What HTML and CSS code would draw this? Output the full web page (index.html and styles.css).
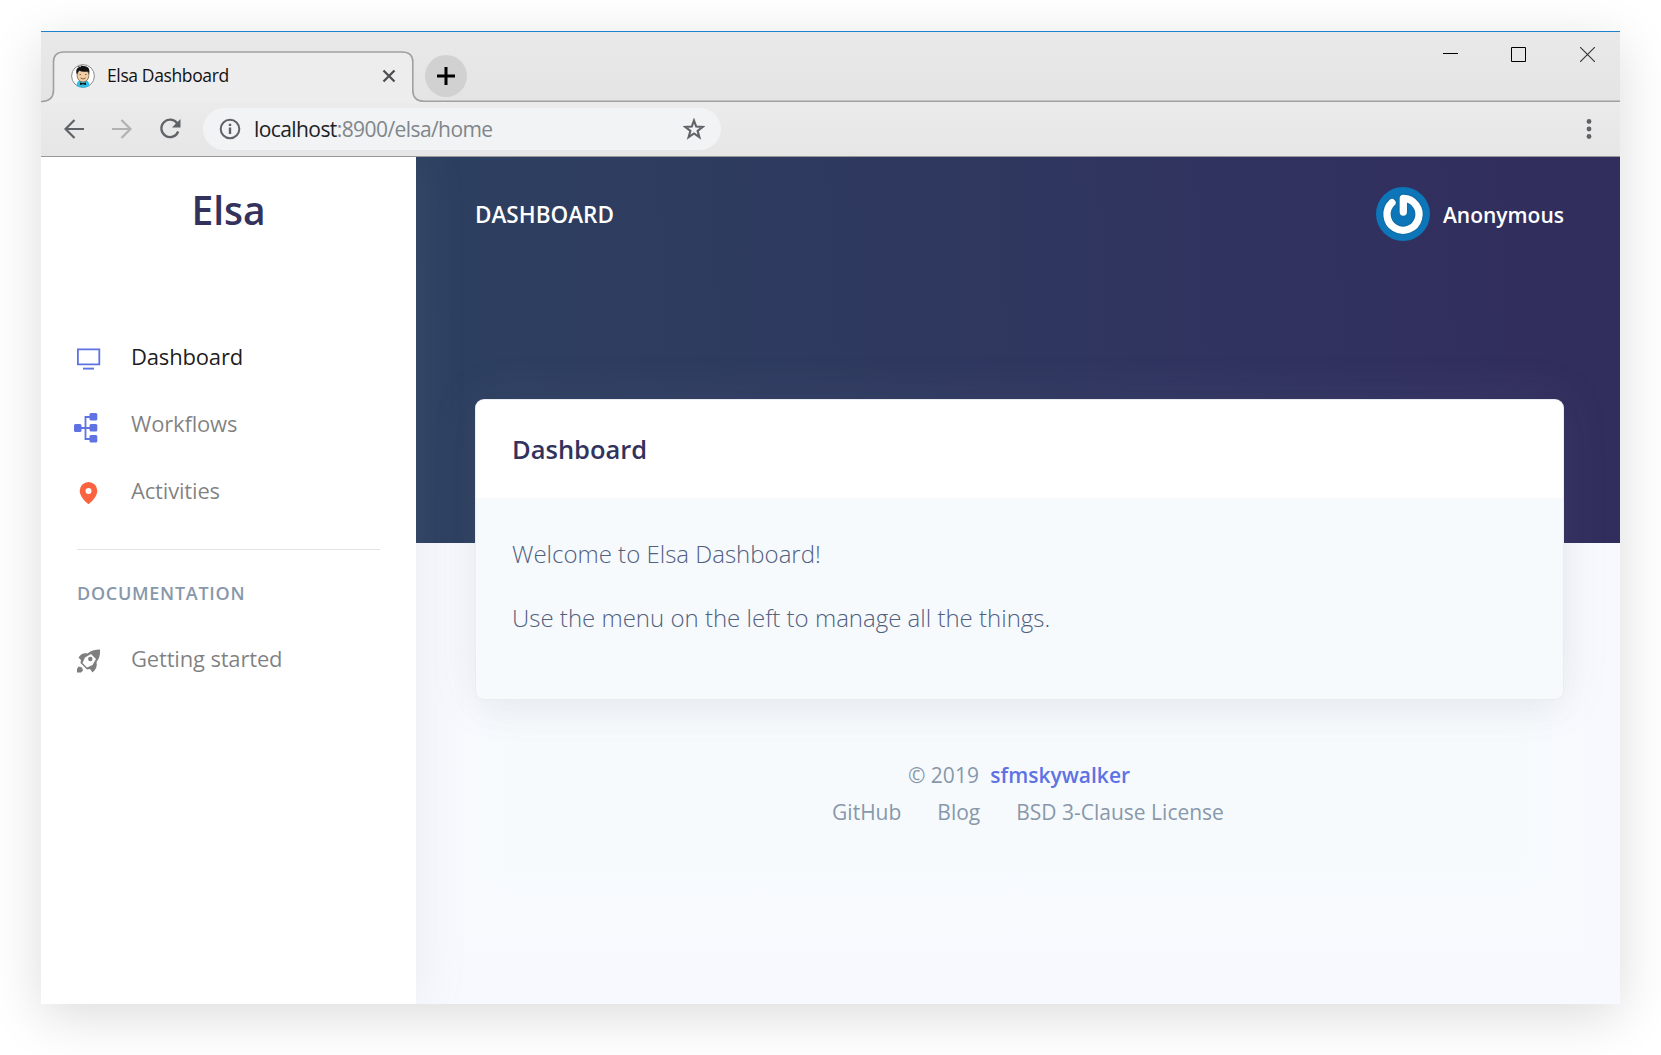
FILE: index.html
```html
<!DOCTYPE html>
<html lang="en">
<head>
<meta charset="utf-8">
<title>Elsa Dashboard</title>
<link rel="stylesheet" href="styles.css">
</head>
<body>
<div class="window">
  <header class="chrome">
    <div class="tabstrip">
      <svg class="tab-outline" width="1579" height="72" viewBox="0 0 1579 72" fill="none"><path d="M0 70.500H1Q12.500 70 12.500 59V31Q12.500 21 23 21H361Q371.800 21 371.800 31V59Q371.800 70.300 383 70.300H1579V72H0Z" fill="#ededed"/><path d="M0 70.500H1Q12.500 70 12.500 59V31Q12.500 21 23 21H361Q371.800 21 371.800 31V59Q371.800 70.300 383 70.300H1579" stroke="#a0a0a0" stroke-width="1.600"/></svg>
      <div class="tab">
        <svg class="favicon" width="24" height="24" viewBox="0 0 24 24"><circle cx="12" cy="12" r="11.400" fill="#fff" stroke="#8b8b8b"/><path d="M5.500 22Q6 16.500 9 16.500H15Q18 16.500 18.500 22Q12 25 5.500 22Z" fill="#31bde6"/><ellipse cx="12" cy="11.500" rx="5.900" ry="6.500" fill="#f1cda5" stroke="#6b5037" stroke-width=".7"/><path d="M5.800 10.500C4.500 6 6 3.500 8 3.500L6.500 2L10 3L9.500 1.500Q17 2 17.800 4.500Q19 7 18.200 10.500L17 7.500Q11 8.500 8 6.500Z" fill="#111"/><path d="M9 18.500L12 19.300L15 18.500V21L12 20.200L9 21Z" fill="#111"/><path d="M9.500 14Q12 16 14.500 14M8.500 10.500H10M14 10.500H15.500" stroke="#8b6044" fill="none"/></svg>
        <span class="tab-title">Elsa Dashboard</span>
        <svg class="tab-close" width="14" height="14" viewBox="0 0 14 14"><path d="M1.500 1.500L12.500 12.500M12.500 1.500L1.500 12.500" stroke="#4d4f52" stroke-width="2.300"/></svg>
      </div>
      <div class="new-tab"><svg width="18" height="18" viewBox="0 0 18 18"><path d="M9 0V18M0 9H18" stroke="#000" stroke-width="3"/></svg></div>
      <div class="controls">
        <svg width="15" height="15" viewBox="0 0 15 15"><path d="M0 6.500H15" stroke="#000"/></svg>
        <svg width="15" height="15" viewBox="0 0 15 15"><path d="M.5 .5H14.500V14.500H.5Z" fill="none" stroke="#000"/></svg>
        <svg width="15" height="15" viewBox="0 0 15 15"><path d="M0 0L15 15M15 0L0 15" stroke="#333" stroke-width="1.100"/></svg>
      </div>
    </div>
    <div class="toolbar">
      <svg class="back" width="20" height="20" viewBox="0 0 20 20"><path d="M20 10H2M10.500 1L1.500 10L10.500 19" fill="none" stroke="#5f6368" stroke-width="2.200"/></svg>
      <svg class="forward" width="20" height="20" viewBox="0 0 20 20"><path d="M0 10H18M9.500 1L18.500 10L9.500 19" fill="none" stroke="#b0b1b2" stroke-width="2.200"/></svg>
      <svg class="reload" width="22" height="22" viewBox="0 0 22 22"><path d="M18.300 5.500A8.700 8.700 0 1 0 19.200 13.500" fill="none" stroke="#5f6368" stroke-width="2.300"/><path d="M21.500 1V9.500H13Z" fill="#5f6368"/></svg>
      <div class="address">
        <svg width="22" height="22" viewBox="0 0 22 22"><circle cx="11" cy="11" r="9.300" fill="none" stroke="#5f6368" stroke-width="2"/><path d="M11 9.500V16M11 5.800V8" stroke="#5f6368" stroke-width="2.400"/></svg>
        <span class="url">localhost<span class="url-rest">:8900/elsa/home</span></span>
        <svg class="star" width="22" height="22" viewBox="0 0 22 22"><path d="M11 2.500L13.200 8.600L19.700 8.900L14.600 12.800L16.400 19.200L11 15.500L5.600 19.200L7.400 12.800L2.300 8.900L8.800 8.600Z" fill="none" stroke="#5f6368" stroke-width="2.100"/></svg>
      </div>
      <svg class="more" width="6" height="20" viewBox="0 0 6 20" fill="#5f6368"><circle cx="3" cy="2.500" r="2.400"/><circle cx="3" cy="10" r="2.400"/><circle cx="3" cy="17.500" r="2.400"/></svg>
    </div>
  </header>
  <div class="app">
    <aside class="sidebar">
      <h1 class="brand">Elsa</h1>
      <nav class="nav">
        <a class="nav-item active"><svg width="24" height="24" viewBox="0 0 24 24"><path d="M.9 2.300H22.300V17.300H.9Z" fill="none" stroke="#5e72e4" stroke-width="1.800"/><path d="M6 21.600H17" stroke="#5e72e4" stroke-width="1.900"/></svg><span>Dashboard</span></a>
        <a class="nav-item"><svg class="flow" width="24" height="30" viewBox="0 0 24 30"><path d="M7 15H16M16 4H11.500V26H16" fill="none" stroke="#5e72e4" stroke-width="1.800"/><g fill="#5e72e4"><rect x="0" y="11" width="7.500" height="8" rx="1.500"/><rect x="15.500" y="0" width="7.800" height="7.500" rx="1.500"/><rect x="15.500" y="11" width="7.800" height="7.500" rx="1.500"/><rect x="15.500" y="22" width="7.800" height="7.500" rx="1.500"/></g></svg><span>Workflows</span></a>
        <a class="nav-item"><svg width="24" height="24" viewBox="0 0 24 24"><path fill="#fb6340" fill-rule="evenodd" d="M11.500 1A8.800 8.800 0 0 1 20.300 9.700C20.300 15 15 20.500 11.500 23.200C8 20.500 2.700 15 2.700 9.700A8.800 8.800 0 0 1 11.500 1ZM11.500 6.900A3 3 0 1 0 11.500 12.900A3 3 0 1 0 11.500 6.900Z"/></svg><span>Activities</span></a>
      </nav>
      <hr class="rule">
      <h6 class="nav-heading">Documentation</h6>
      <a class="nav-item"><svg width="24" height="24" viewBox="0 0 24 24"><path fill="#7f7f7f" fill-rule="evenodd" d="M23 .5C23.500 6 22 10 19.500 13C20.500 17 19 20.500 15.500 23.500L13 20L10 20.500L3.500 14L4 11L1.500 8.500C4 4.500 7 3.500 10.500 4.500C13.500 2 17.500 .5 23 .5ZM14 5L8 8.500L5.500 14L10 18.500L15.500 16L19 10ZM13.300 7.800A2.200 2.200 0 1 0 13.300 12.200A2.200 2.200 0 1 0 13.300 7.800Z"/><path fill="#7f7f7f" d="M1.500 17.500L5 18.500L6 21.500L4 23.500H0V20Z"/></svg><span>Getting started</span></a>
    </aside>
    <main class="main">
      <div class="hero">
        <div class="page-title">Dashboard</div>
        <div class="user">
          <svg width="54" height="54" viewBox="0 0 54 54"><circle cx="27" cy="27" r="27" fill="#0c76b8"/><path d="M15.800 15.500A16 16 0 1 0 27.300 11V25" fill="none" stroke="#1b5c88" stroke-opacity=".35" stroke-width="9.500" stroke-linecap="round" stroke-linejoin="round"/><path d="M16 15.700A16 16 0 1 0 27.300 11.300V25" fill="none" stroke="#fff" stroke-width="7.300" stroke-linecap="round" stroke-linejoin="round"/></svg>
          <span>Anonymous</span>
        </div>
      </div>
      <section class="card">
        <h3 class="card-head">Dashboard</h3>
        <div class="card-body"><p>Welcome to Elsa Dashboard!</p><p>Use the menu on the left to manage all the things.</p></div>
      </section>
      <footer class="footer">
        <div class="copyright">© 2019 <b>sfmskywalker</b></div>
        <div class="links"><a>GitHub</a><a>Blog</a><a>BSD 3-Clause License</a></div>
      </footer>
    </main>
  </div>
</div>
</body>
</html>
```
FILE: styles.css
```css
* { box-sizing: border-box; }
body { margin: 0; background: #fff; font-family: "Open Sans", sans-serif; height: 1055px; overflow: hidden; padding: 31px 41px 51px; }
h1, h3, h6, p, hr { margin: 0; }
svg { display: block; flex: none; }
.window { width: 1579px; height: 973px; display: flex; flex-direction: column; box-shadow: 0 12px 50px rgba(0,0,0,.14); }
.chrome { height: 126px; border-top: 1px solid #1c81cf; border-bottom: 1px solid #999; background: linear-gradient(#e9e9e9, #e4e4e4 55%, #ebebeb 56%, #e6e6e6); }
.tabstrip { position: relative; height: 70px; display: flex; padding-left: 30px; }
.tab-outline { position: absolute; left: 0; top: -1px; }
.tab { position: relative; width: 354px; padding-top: 19px; height: 69px; display: flex; align-items: center; }
.tab-title { margin: -2px 0 0 12px; width: 275px; font-size: 17.500px; letter-spacing: -.38px; white-space: nowrap; color: #111; }
.new-tab { position: relative; width: 42px; height: 42px; margin: 23px 0 0; border-radius: 50%; background: #d1d1d1; display: flex; align-items: center; justify-content: center; }
.controls { margin: 15px 25px 0 auto; display: flex; gap: 54px; height: 15px; }
.controls svg:first-child { margin-right: -1px; }
.toolbar { height: 54px; display: flex; align-items: center; padding-left: 23px; }
.back, .forward, .reload { margin-top: -1px; }
.forward { margin-left: 28px; }
.reload { margin-left: 27px; }
.address { margin-left: 22px; width: 518px; height: 42px; border-radius: 21px; background: #f1f3f4; display: flex; align-items: center; padding: 0 16px; }
.url { margin-left: 13px; font-size: 21px; letter-spacing: -.58px; color: #202124; }
.url-rest { color: #80868b; }
.star { margin-left: auto; }
.more { margin: 0 28px 0 auto; }
.app { flex: 1; display: flex; min-height: 0; }
.sidebar { width: 375px; background: #fff; padding: 0 36px; position: relative; z-index: 1; box-shadow: 0 0 48px rgba(136,152,170,.15); clip-path: inset(0 -60px 0 0); }
.brand { font-size: 39px; line-height: 54px; font-weight: 600; color: #32325d; text-align: center; padding-top: 26px; height: 166px; }
.nav-item { display: flex; align-items: center; height: 67px; font-size: 22px; letter-spacing: -.17px; color: rgba(0,0,0,.5); }
.nav-item span { padding-bottom: 2px; }
.nav-item svg { margin-top: 4px; margin-right: 30px; }
.nav-item .flow { margin-left: -3px; margin-right: 33px; margin-top: 8px; }
.nav-item.active { color: rgba(0,0,0,.9); }
.rule { border: 0; height: 1px; background: #e3e3e3; margin: 25px 0 32px; }
.nav-heading { font-size: 18px; line-height: 22px; font-weight: 600; letter-spacing: .72px; color: #8898aa; text-transform: uppercase; margin-bottom: 21px; }
.main { flex: 1; background: linear-gradient(rgba(248,249,254,0) 690px, #f8f9fe 800px), linear-gradient(90deg, #f8f9fe 20px, #f6fafd 90px, #f6fafd calc(100% - 100px), #f8f9fe calc(100% - 30px)); overflow: hidden; }
.hero { height: 386px; background: linear-gradient(87deg, #2d4060 0%, #2f375f 50%, #31305f 82%, #312d5d 100%); padding: 30px 56px 0 59px; display: flex; justify-content: space-between; align-items: flex-start; color: #fff; font-weight: 600; }
.page-title { font-size: 22.500px; line-height: 56px; text-transform: uppercase; }
.user { display: flex; align-items: center; gap: 12.500px; font-size: 21px; }
.user span { padding-top: 2px; }
.card { margin: -144px 56px 0 59px; height: 301px; border: 1.500px solid rgba(0,0,0,.05); border-radius: 9px; position: relative; background: #f6fafd; box-shadow: 0 0 48px rgba(136,152,170,.12), 0 12px 36px rgba(0,0,0,.03); overflow: hidden; }
.card-head { height: 98px; background: #fff; padding-left: 36px; font-size: 25.500px; line-height: 98px; font-weight: 600; color: #32325d; }
.card-body { padding: 36px 36px; font-size: 24px; line-height: 40px; font-weight: 300; color: #525f7f; }
.card-body p { margin-bottom: 24px; }
.footer { padding-top: 57px; text-align: center; font-size: 21px; line-height: 37px; color: #8898aa; }
.copyright { padding-left: 2px; }
.copyright b { margin-left: 6px; font-weight: 600; color: #5e72e4; }
.links { display: flex; justify-content: center; gap: 36px; padding-left: 20px; }
```
